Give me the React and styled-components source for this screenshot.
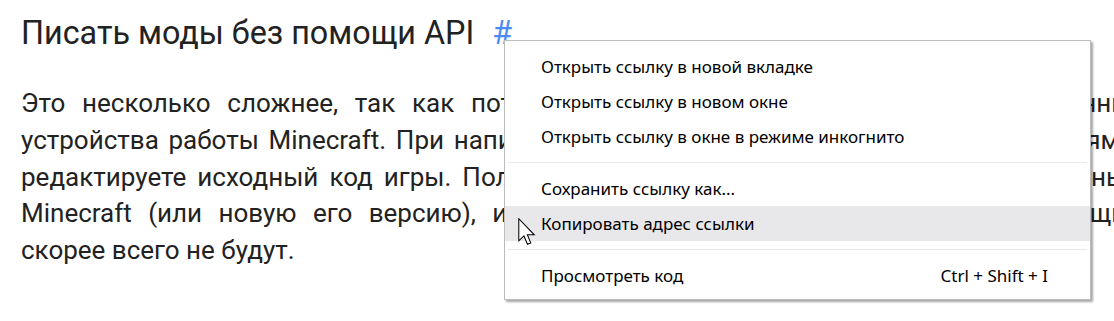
import styled, { createGlobalStyle } from "styled-components";

const GlobalStyle = createGlobalStyle`
  html, body {
    margin: 0;
    padding: 0;
    background: #fff;
    overflow: hidden;
  }
`;

const lines = [
  "Это несколько сложнее, так как потребуется полноценно понимать все внутренние",
  "устройства работы Minecraft. При написании модов без API вы обладаете изменениями,",
  "редактируете исходный код игры. Получается, что после выпуска версии, обновлённые",
  "Minecraft (или новую его версию), и несовместимыми модулями, и принадлежащие",
  "скорее всего не будут.",
];

const items = [
  { label: "Открыть ссылку в новой вкладке" },
  { label: "Открыть ссылку в новом окне" },
  { label: "Открыть ссылку в окне в режиме инкогнито" },
  { divider: true },
  { label: "Сохранить ссылку как..." },
  { label: "Копировать адрес ссылки", hover: true },
  { divider: true },
  { label: "Просмотреть код", shortcut: "Ctrl + Shift + I" },
];

const App = () => {
  return (
    <Page>
      <GlobalStyle />
      <Article>
        <Heading>
          Писать моды без помощи API<Anchor href="#api">#</Anchor>
        </Heading>
        <Text>
          {lines.map((line, i) => (
            <Line key={i} $last={i === lines.length - 1}>
              {line}{" "}
            </Line>
          ))}
        </Text>
      </Article>

      <Menu>
        {items.map((item, i) =>
          item.divider ? (
            <Divider key={i} />
          ) : (
            <Item key={i} $hover={item.hover}>
              <span>{item.label}</span>
              {item.shortcut && <Shortcut>{item.shortcut}</Shortcut>}
            </Item>
          )
        )}
      </Menu>

      <Cursor width="20" height="28" viewBox="0 0 13.5 19">
        <path
          d="M0.5 0.5 L0.5 15.5 L4 12.2 L6.4 17.8 L8.6 16.9 L6.3 11.4 L11 11.4 Z"
          fill="#fff"
          stroke="#000"
          strokeWidth="0.7"
          strokeLinejoin="miter"
        />
      </Cursor>
    </Page>
  );
};

const Page = styled.div`
  position: relative;
  width: 1114px;
  height: 321px;
  overflow: hidden;
  font-family: Roboto, "Liberation Sans", sans-serif;
  color: #222;
`;

const Article = styled.article`
  padding: 13px 0 0 21px;
  width: 1119px;
`;

const Heading = styled.h2`
  margin: 0 0 32px;
  font-size: 32.3px;
  line-height: 40px;
  font-weight: 400;
  color: #222;
`;

const Anchor = styled.a`
  margin-left: 18px;
  color: #4b8bf4;
  text-decoration: none;
`;

const Text = styled.p`
  margin: 0;
  font-size: 26px;
  line-height: 36.75px;
`;

const Line = styled.span`
  display: block;
  text-align: justify;
  text-align-last: ${(p) => (p.$last ? "left" : "justify")};
`;

const Menu = styled.div`
  position: absolute;
  left: 504px;
  top: 40px;
  width: 585px;
  padding: 8px 0 6px;
  background: #fff;
  border: 1px solid #bdbdbd;
  box-shadow: 2px 2px 2px rgba(0, 0, 0, 0.35);
  font-family: "Noto Sans", "Open Sans", sans-serif;
  font-size: 17px;
  color: #000;
`;

const Item = styled.div`
  display: flex;
  align-items: center;
  justify-content: space-between;
  height: 35px;
  padding: 0 42px 0 36px;
  background: ${(p) => (p.$hover ? "#e8e8eb" : "transparent")};
`;

const Shortcut = styled.span`
  color: #000;
`;

const Divider = styled.div`
  height: 1px;
  margin: 8px 3px;
  background: #e9e9e9;
`;

const Cursor = styled.svg`
  position: absolute;
  left: 518px;
  top: 218px;
`;

export default App;
